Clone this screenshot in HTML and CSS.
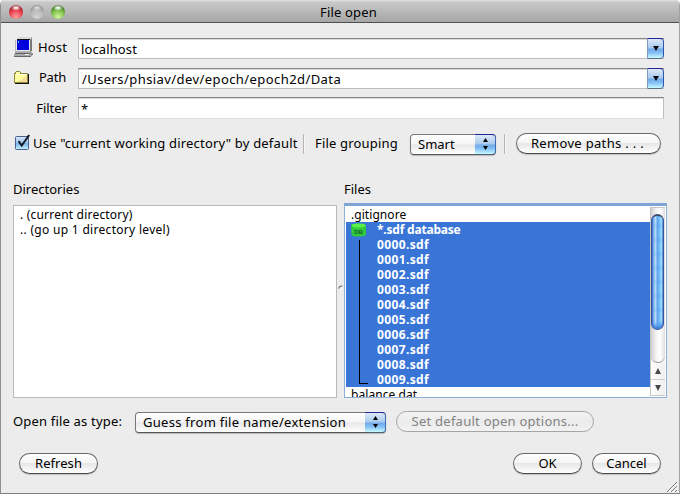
FILE: index.html
```
<!DOCTYPE html>
<html lang="en">
<head>
<meta charset="utf-8">
<title>File open</title>
<link rel="stylesheet" href="styles.css">
</head>
<body>
<div class="window">
  <header class="titlebar">
    <div class="lights"><i class="light red"></i><i class="light gray"></i><i class="light green"></i></div>
    <h1>File open</h1>
  </header>

  <main class="content">
    <section class="form">
      <div class="field-label host">
        <svg width="20" height="20" viewBox="0 0 20 20" shape-rendering="crispEdges">
          <path d="M1 3L4 0H18V14L15 16H1Z" fill="#b4b4b4"/>
          <path d="M4 0H18L15 2H2Z" fill="#d8d8d8"/>
          <path d="M16 3L18 1V14L16 15Z" fill="#777"/>
          <rect x="2" y="2" width="14" height="12" fill="#e8e8f0"/>
          <rect x="3" y="3" width="12" height="10" fill="#0000df"/>
          <rect x="3" y="2" width="13" height="1" fill="#111"/>
          <rect x="4" y="4" width="1" height="2" fill="#00e0c0"/>
          <path d="M2 15H18L19 17L17 19H0V17Z" fill="#a8a8a8"/>
          <path d="M1 16H16V17H1ZM0 19H17V20H0ZM17 17H19V18H17Z" fill="#666"/>
          <rect x="11" y="17" width="4" height="1" fill="#eee"/>
        </svg>
        <span>Host</span>
      </div>
      <div class="combo"><span>localhost</span><b></b></div>

      <div class="field-label path">
        <svg width="15" height="13" viewBox="0 0 15 13" shape-rendering="crispEdges">
          <path d="M0 2H1V1H2V0H6V1H7V2H14V12H0Z" fill="#8f8a40"/>
          <path d="M1 3H2V1H6V3H13V11H1Z" fill="#ffff9e"/>
          <path d="M2 3H13V4H2Z" fill="#ffffe6"/>
          <path d="M12 4H13V11H4V10H6V9H8V8H9V7H10V6H12Z" fill="#f5dc98"/>
          <path d="M14 3H15V13H1V12H14Z" fill="#111"/>
        </svg>
        <span>Path</span>
      </div>
      <div class="combo"><span class="path-value">/Users/phsiav/dev/epoch/epoch2d/Data</span><b></b></div>

      <div class="field-label filter"><span>Filter</span></div>
      <div class="input">*</div>
    </section>

    <section class="options">
      <svg class="check" width="16" height="17" viewBox="0 0 16 17">
        <defs><linearGradient id="cb" x1="0" y1="0" x2="0" y2="1"><stop offset="0" stop-color="#dbe9f9"/><stop offset=".48" stop-color="#9cc6f0"/><stop offset=".52" stop-color="#76aee9"/><stop offset="1" stop-color="#c4f2ff"/></linearGradient></defs>
        <rect x=".5" y="2.5" width="13" height="13" rx="1" fill="url(#cb)" stroke="#4a5f92"/>
        <path d="M3.6 7.2L6.7 11.6L14.2 1" fill="none" stroke="#151a24" stroke-width="2"/>
      </svg>
      <span class="cwd">Use "current working directory" by default</span>
      <i class="divider first"></i>
      <span class="grouping">File grouping</span>
      <div class="select smart"><span>Smart</span><b><svg width="7" height="13" viewBox="0 0 7 13"><path d="M3.5 0L6 4H1ZM3.5 12L6 8H1Z"/></svg></b></div>
      <i class="divider second"></i>
      <button class="remove">Remove paths . . .</button>
    </section>

    <section class="lists">
      <div class="column directories">
        <h2>Directories</h2>
        <div class="list dirs">
          <div class="row cur">. (current directory)</div>
          <div class="row up">.. (go up 1 directory level)</div>
        </div>
      </div>
      <div class="splitter"><svg width="5" height="5" viewBox="0 0 5 5"><circle cx="2.7" cy="2.7" r="1.8" fill="#f8f8f8"/><path d="M.8 3.8Q.8 1 4.4 1.2" fill="none" stroke="#777" stroke-width="1.2"/></svg></div>
      <div class="column">
        <h2>Files</h2>
        <div class="list files">
          <div class="rows">
            <div class="row">.gitignore</div>
            <div class="group">
              <div class="tree">
                <svg width="15" height="14" viewBox="0 0 15 14"><path d="M0 2.5Q0 .5 7.5 .5T15 2.5V11.5Q14.5 13.5 7.5 13.5T.5 11.5Z" fill="#30c83c"/><path d="M.5 2.5Q.5 .5 7.5 .5T14.5 2.5Q14 4.5 7.5 4.5T.5 2.5Z" fill="#5cf04a"/><text x="3.2" y="11" class="db">DB</text></svg>
                <i class="branch"></i>
              </div>
              <div class="names">
                <div class="row database">*.sdf database</div>
                <div class="row">0000.sdf</div>
                <div class="row">0001.sdf</div>
                <div class="row">0002.sdf</div>
                <div class="row">0003.sdf</div>
                <div class="row">0004.sdf</div>
                <div class="row">0005.sdf</div>
                <div class="row">0006.sdf</div>
                <div class="row">0007.sdf</div>
                <div class="row">0008.sdf</div>
                <div class="row">0009.sdf</div>
              </div>
            </div>
            <div class="row">balance.dat</div>
          </div>
          <div class="scrollbar">
            <div class="track"><div class="thumb"></div></div>
            <div class="arrow"><svg width="8" height="8" viewBox="0 0 8 8"><path d="M4 1L7 7H1Z"/></svg></div>
            <div class="arrow"><svg width="8" height="8" viewBox="0 0 8 8"><path d="M4 7L7 1H1Z"/></svg></div>
          </div>
        </div>
      </div>
    </section>

    <section class="type">
      <span class="type-label">Open file as type:</span>
      <div class="select guess"><span>Guess from file name/extension</span><b><svg width="7" height="13" viewBox="0 0 7 13"><path d="M3.5 0L6 4H1ZM3.5 12L6 8H1Z"/></svg></b></div>
      <button class="defaults" disabled>Set default open options...</button>
    </section>

    <footer class="actions">
      <button class="refresh">Refresh</button>
      <button class="ok">OK</button>
      <button class="cancel">Cancel</button>
    </footer>
  </main>
  <svg class="grip" width="12" height="12" viewBox="0 0 12 12"><path d="M1 11L11 1M5 11L11 5M9 11L11 9" stroke="#777"/><path d="M2.4 11L11 2.4M6.4 11L11 6.4" stroke="#fff" stroke-width=".8"/></svg>
</div>
</body>
</html>
```
FILE: styles.css
```
* { box-sizing: border-box; }
body {
  margin: 0;
  background: #fff;
  color: #000;
  font: 13px/18px "Noto Sans", "Open Sans", sans-serif;
}
.window {
  position: relative;
  width: 680px;
  height: 494px;
  overflow: hidden;
  background: #ececec;
  border: 1px solid #8f8f8f;
  border-top: 0;
  border-right: 1px solid #a0a0a0;
  border-bottom-color: #7e7e7e;
  border-radius: 5px 5px 0 0;
}
h1, h2 { margin: 0; font-size: 13px; font-weight: 400; }

.titlebar {
  display: grid;
  grid-template-columns: 1fr auto 1fr;
  align-items: center;
  height: 23px;
  padding: 0 8px;
  background: linear-gradient(#e4e4e4 0, #c9c9c9 2px, #a6a6a6 100%);
  border-bottom: 1px solid #505050;
}
.titlebar h1 { padding: 2px 0 0 17px; letter-spacing: .18px; }
.lights { display: flex; gap: 7px; padding-top: 1px; }
.light { width: 14px; height: 14px; border-radius: 50%; }
.red { background: radial-gradient(ellipse 5px 3px at 50% 20%, #fff 10%, transparent), radial-gradient(circle at 50% 85%, #ff9f9f 0, #e9424c 48%, #a31e2a 75%); }
.gray { background: radial-gradient(ellipse 5px 3px at 50% 20%, #ddd 10%, transparent), radial-gradient(circle at 50% 85%, #d4d4d4 0, #b8b8b8 50%, #8c8c8c 80%); }
.green { background: radial-gradient(ellipse 5px 3px at 50% 20%, #fff 10%, transparent), radial-gradient(circle at 50% 85%, #d2f59d 0, #7fc04c 48%, #477f27 75%); }

.content { padding: 15px 12px 0; }
.form {
  display: grid;
  grid-template-columns: 65px 586px;
  grid-template-rows: 21px 21px 22px;
  row-gap: 9px;
}
.field-label { display: flex; align-items: center; width: 54px; height: 18px; }
.field-label span { margin-left: auto; }
.host svg { margin-left: 1px; }
.host span { letter-spacing: .15px; }
.path { width: 52px; margin-left: 1px; }
.path span { letter-spacing: -.2px; }
.filter { margin-top: 1px; }
.combo, .input {
  display: flex;
  align-items: center;
  background: #fff;
  border: 1px solid #bdbdbd;
  border-top-color: #858585;
  box-shadow: inset 0 1px #d9d9d9;
  padding: 1px 0 0 2px;
  letter-spacing: .12px;
}
.combo { border-right: 0; }
.combo span { flex: 1; }
.combo .path-value { padding-left: 1px; letter-spacing: .42px; }
.input { margin-top: -1px; height: 22px; padding-top: 1px; border-bottom-color: #ddd; }
.combo b {
  display: grid;
  place-items: center;
  align-self: stretch;
  width: 17px;
  margin: -2px 0 -1px;
  border: 1px solid #4b6fb0;
  border-top-color: #24249a;
  border-right-color: #2c55b0;
  border-left-color: #8299bb;
  border-bottom-color: #5c6c80;
  border-radius: 0 4px 4px 0;
  background: linear-gradient(#dce8f6 0, #a9caef 48%, #72aae8 52%, #80bbf3 70%, #c8fbff 100%);
}
.combo b::after {
  content: "";
  border: 3px solid transparent;
  border-top: 5px solid #0a0a14;
  border-bottom: 0;
}

.options { display: flex; align-items: center; height: 23px; margin-top: 13px; padding-left: 2px; }
.check { margin-top: -4px; }
.cwd { width: 270px; margin: -3px 0 0 2px; letter-spacing: .18px; white-space: nowrap; }
.divider { width: 2px; height: 20px; margin-top: -2px; border-left: 1px solid #b5b5b5; border-right: 1px solid #f6f6f6; }
.grouping { width: 95px; margin: -3px 0 0 10px; letter-spacing: .18px; white-space: nowrap; }
.second { margin-left: 8px; }

.select {
  display: flex;
  height: 21px;
  border: 1px solid #777;
  border-bottom-color: #555;
  border-radius: 4px;
  box-shadow: 0 1px 1px #bbb;
  background: linear-gradient(#fff 0, #f4f4f4 48%, #e7e7e7 52%, #fff 100%);
}
.select span { flex: 1; padding-left: 7px; line-height: 19px; white-space: nowrap; }
.select b {
  display: grid;
  place-items: center;
  width: 21px;
  margin: -1px;
  border: 1px solid #3f6cb4;
  border-top-color: #24249a;
  border-left: 0;
  border-bottom-color: #505c70;
  border-radius: 0 4px 4px 0;
  background: linear-gradient(#dce8f6 0, #a9caef 48%, #72aae8 52%, #80bbf3 70%, #c8fbff 100%);
}
.smart { width: 86px; }
.guess { width: 251px; letter-spacing: .28px; }

button {
  height: 21px;
  margin: 0;
  padding: 0;
  border: 1px solid #686868;
  border-bottom-color: #4c4c4c;
  border-radius: 11px;
  box-shadow: 0 1px 1px #c0c0c0;
  background: linear-gradient(#fff 0, #f6f6f6 45%, #e7e7e7 50%, #fff 100%);
  color: #000;
  font: inherit;
  line-height: 17px;
  white-space: nowrap;
}
.remove { width: 145px; margin: -2px 0 0 10px; padding-right: 2px; letter-spacing: .32px; }
.defaults {
  width: 198px;
  margin: -1px 0 0 10px;
  padding-bottom: 1px;
  letter-spacing: .25px;
  color: #838383;
  border-color: #a5a5a5;
  background: linear-gradient(#f4f4f4, #ebebeb 50%, #f2f2f2);
  box-shadow: none;
}
.actions button { padding-bottom: 1px; }

.lists { display: flex; height: 218px; margin-top: 24px; }
.column { flex: none; width: 323px; }
.directories { width: 324px; }
.column h2 { height: 25px; }
.splitter { display: grid; place-items: center; width: 7px; height: 214px; padding-top: 1px; }
.list { background: #fff; font-size: 12px; }
.row { height: 15px; line-height: 15px; white-space: nowrap; }
.dirs { height: 193px; border: 1px solid #b9b9b9; padding: 1px 6px; }
.cur { letter-spacing: .2px; }
.up { letter-spacing: .3px; }
.files {
  display: flex;
  height: 195px;
  margin-top: -2px;
  border: 1px solid #8cafd8;
  border-top: 3px solid #7da4d3;
  padding: 1px;
}
.rows { width: 304px; height: 190px; overflow: hidden; }
.rows > .row { padding-left: 5px; letter-spacing: .06px; }
.group { display: flex; background: #3875d7; color: #fff; font-weight: 700; letter-spacing: .36px; }
.tree { display: flex; flex-direction: column; width: 31px; padding: 1px 0 3px 5px; }
.branch { flex: 1; width: 9px; margin: 3px 0 0 8px; border: 1px solid #000; border-width: 0 0 1px 1px; }
.group .database { letter-spacing: -.2px; }
.db { font: 700 6px "Liberation Sans", sans-serif; fill: #13642a; letter-spacing: 0; }
.scrollbar { display: flex; flex-direction: column; width: 15px; height: 189px; background: #f7f7f7; border-left: 1px solid #c5c5c5; border-bottom: 1px solid #c8c8c8; }
.track {
  height: 156px;
  padding-top: 6px;
  border-top: 1px solid #c5c5c5;
  border-radius: 0 0 8px 8px;
  border-bottom: 1px solid #999;
  background: linear-gradient(90deg, #d0d0d0, #f2f2f2 35%, #fff 65%, #dedede);
}
.thumb {
  height: 116px;
  width: 13px;
  border: 1px solid #36539c;
  border-top: 2px solid #3b4b70;
  border-radius: 7px;
  background:
    repeating-linear-gradient(transparent 0 6px, rgba(45,120,225,.14) 10px, transparent 14px),
    linear-gradient(90deg, #2b55c8 0, #8dbdf2 15%, #b9dcfb 34%, #5ca5ef 48%, #79c0fb 68%, #b2edff 90%, #477db8);
  box-shadow: inset 0 -3px 3px #3f83df;
}
.arrow { display: grid; place-items: center; height: 16px; background: linear-gradient(90deg, #fff, #eee); fill: #484848; }
.arrow + .arrow { border-top: 1px solid #ccc; }

.type { display: flex; align-items: center; height: 22px; margin-top: 13px; }
.type-label { width: 122px; margin-top: -2px; letter-spacing: .18px; white-space: nowrap; }
.actions { display: flex; margin-top: 20px; padding-left: 6px; }
.refresh { width: 79px; letter-spacing: .06px; }
.ok { width: 69px; margin-left: 415px; }
.cancel { width: 69px; margin-left: 10px; }
.grip { position: absolute; right: 1px; bottom: 0; }
```
